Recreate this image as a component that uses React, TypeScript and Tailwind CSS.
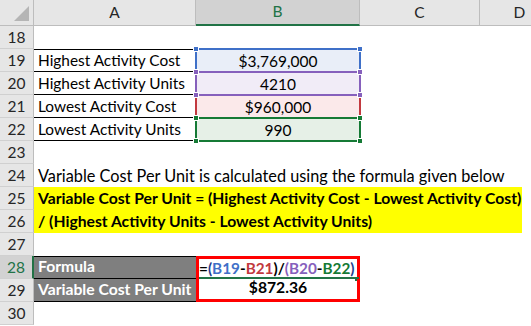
import React from 'react'

const font = { fontFamily: 'Lato, "Liberation Sans", sans-serif' }

const rows = [18, 19, 20, 21, 22, 23, 24, 25, 26, 27, 28, 29, 30]

type Range = {
  bg: string
  line: string
  z: string
  value: string
}

const ranges: Record<number, Range> = {
  19: { bg: 'bg-[#e9eef8]', line: 'border-[#3f70c8]', z: 'z-20', value: '$3,769,000' },
  20: { bg: 'bg-[#f1ecf7]', line: 'border-[#8660bc]', z: 'z-30', value: '4210' },
  21: { bg: 'bg-[#fbe9ea]', line: 'border-[#c2393f]', z: 'z-10', value: '$960,000' },
  22: { bg: 'bg-[#e6f0e7]', line: 'border-[#157a35]', z: 'z-40', value: '990' },
}

const handleBg: Record<number, string> = {
  19: 'bg-[#3f70c8]',
  20: 'bg-[#8660bc]',
  21: 'bg-[#c2393f]',
  22: 'bg-[#157a35]',
}

const labels: Record<number, string> = {
  19: 'Highest Activity Cost',
  20: 'Highest Activity Units',
  21: 'Lowest Activity Cost',
  22: 'Lowest Activity Units',
}

const RangeCell = ({ row }: { row: number }) => {
  const r = ranges[row]
  const h = handleBg[row]
  return (
    <div className={`relative ${r.bg} flex items-end justify-center pb-[3px] text-[15.5px] leading-none text-black`}>
      <div className={`absolute -inset-[1px] border-2 ${r.line} ${r.z} pointer-events-none`} />
      <div className={`absolute -left-[3px] -top-[3px] w-[6px] h-[6px] ${h} ${r.z} border border-white`} />
      <div className={`absolute -right-[3px] -top-[3px] w-[6px] h-[6px] ${h} ${r.z} border border-white`} />
      <div className={`absolute -left-[3px] -bottom-[3px] w-[6px] h-[6px] ${h} ${r.z} border border-white`} />
      <div className={`absolute -right-[3px] -bottom-[3px] w-[6px] h-[6px] ${h} ${r.z} border border-white`} />
      <span className="relative">{r.value}</span>
    </div>
  )
}

const RowHeader = ({ n }: { n: number }) => (
  <div
    className={`flex items-end justify-center pb-[3px] text-[15.5px] leading-none border-b border-[#d0d0d0] border-r ${
      n === 28
        ? 'bg-[#d2d2d2] text-[#217346] border-r-2 border-r-[#217346]'
        : 'bg-[#e6e6e6] text-[#262626] border-r-[#bdbdbd]'
    }`}
  >
    {n}
  </div>
)

export default function App() {
  return (
    <div className="w-[531px] h-[326px] overflow-hidden bg-white" style={font}>
      <div className="grid grid-cols-[34px_162px_164px_120px_1fr] grid-rows-[26px_repeat(13,23px)]">
        {/* Column headers */}
        <div className="relative bg-[#e6e6e6] border-r border-b border-[#bdbdbd]">
          <div className="absolute right-[4px] bottom-[4px] w-0 h-0 border-l-[15px] border-l-transparent border-b-[15px] border-b-[#b5b5b5]" />
        </div>
        <div className="bg-[#e6e6e6] border-r border-b border-[#bdbdbd] flex items-center justify-center text-[15.5px] text-[#262626]">
          A
        </div>
        <div className="bg-[#d2d2d2] border-r border-[#bdbdbd] border-b-2 border-b-[#217346] flex items-center justify-center text-[15.5px] text-[#217346]">
          B
        </div>
        <div className="bg-[#e6e6e6] border-r border-b border-[#bdbdbd] flex items-center justify-center text-[15.5px] text-[#262626]">
          C
        </div>
        <div className="bg-[#e6e6e6] border-b border-[#bdbdbd] flex items-center justify-center pl-[28px] text-[15.5px] text-[#262626]">
          D
        </div>

        {rows.map(n => {
          const cells: React.ReactNode[] = [<RowHeader key={`h${n}`} n={n} />]

          if (labels[n]) {
            cells.push(
              <div
                key={`a${n}`}
                className={`flex items-end pl-[4px] pb-[3px] text-[15.4px] leading-none text-black border-b border-black whitespace-nowrap ${
                  n === 19 ? 'border-t' : ''
                }`}
              >
                {labels[n]}
              </div>
            )
            cells.push(<RangeCell key={`b${n}`} row={n} />)
            cells.push(<div key={`c${n}`} />, <div key={`d${n}`} />)
          } else if (n === 24) {
            cells.push(
              <div key="a24" className="col-span-4 flex items-end pl-[4px] pb-[3px] text-[16.3px] leading-none text-black whitespace-nowrap">
                Variable Cost Per Unit is calculated using the formula given below
              </div>
            )
          } else if (n === 25 || n === 26) {
            cells.push(
              <div key={`a${n}`} className="col-span-4 pr-[9px]">
                <div className="h-full bg-[#ffff00] flex items-end pl-[4px] pb-[3px] text-[15.7px] leading-none font-bold text-black whitespace-nowrap">
                  {n === 25
                    ? 'Variable Cost Per Unit = (Highest Activity Cost - Lowest Activity Cost)'
                    : '/ (Highest Activity Units - Lowest Activity Units)'}
                </div>
              </div>
            )
          } else if (n === 28 || n === 29) {
            cells.push(
              <div
                key={`a${n}`}
                className={`bg-[#7f7f7f] flex items-end pl-[4px] pb-[3px] text-[15.7px] leading-none font-bold text-white border-b border-black whitespace-nowrap ${
                  n === 28 ? 'border-t' : ''
                }`}
              >
                {n === 28 ? 'Formula' : 'Variable Cost Per Unit'}
              </div>
            )
            cells.push(
              <div
                key={`b${n}`}
                className={`relative flex items-end pb-[3px] leading-none font-bold text-black border-[#ff0000] border-x-[3px] ${
                  n === 28 ? 'border-t-[3px] justify-start text-[15.3px]' : 'border-b-[3px] justify-center text-[15.7px]'
                }`}
              >
                {n === 28 ? (
                  <>
                    <span className="whitespace-nowrap">
                      =<span className="text-[#1f3f8f]">(</span>
                      <span className="text-[#3f70c8]">B19</span>-<span className="text-[#c2393f]">B21</span>)/
                      <span className="text-[#8660bc]">(B20</span>-<span className="text-[#157a35]">B22</span>
                      <span className="text-[#1f3f8f]">)</span>
                    </span>
                    <div className="absolute left-0 right-[2px] bottom-0 h-[2px] bg-[#217346]" />
                    <div className="absolute -right-[2px] -bottom-[2px] w-[4px] h-[4px] bg-[#217346]" />
                  </>
                ) : (
                  '$872.36'
                )}
              </div>
            )
            cells.push(<div key={`c${n}`} />, <div key={`d${n}`} />)
          } else {
            cells.push(<div key={`a${n}`} className="col-span-4" />)
          }
          return cells
        })}
      </div>
    </div>
  )
}
